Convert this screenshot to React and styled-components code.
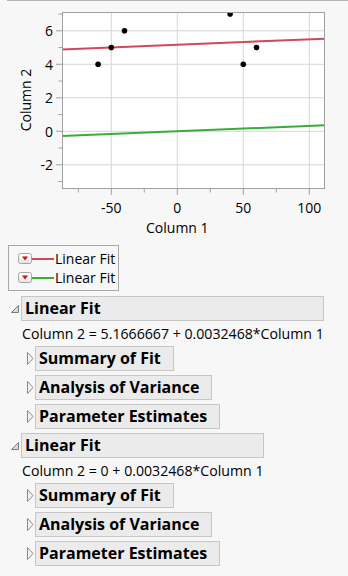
import React from 'react';
import styled, { createGlobalStyle } from 'styled-components';

const Global = createGlobalStyle`
  html, body { margin: 0; padding: 0; background: #f7f7f7; }
  body {
    width: 348px; height: 576px; overflow: hidden;
    font-family: "Open Sans", "Liberation Sans", sans-serif;
    color: #000;
  }
`;

const Page = styled.div`
  display: flex;
  flex-direction: column;
  align-items: flex-start;
  width: 348px;
`;

const TopRule = styled.div`
  align-self: stretch;
  margin-left: 7px;
  height: 1px;
  background: #b4b4b4;
`;

const ChartSvg = styled.svg`
  display: block;
  width: 348px;
  height: 244px;
  font-family: "Open Sans", "Liberation Sans", sans-serif;
  font-size: 14px;
`;

const Legend = styled.div`
  display: flex;
  flex-direction: column;
  margin-left: 8px;
  border: 1px solid #a8a8a8;
  padding: 3px 3px 3px 9px;
`;

const LegendItem = styled.div`
  display: flex;
  align-items: center;
  height: 19px;
`;

const MenuButton = styled.svg`
  display: block;
  flex: none;
  width: 14px;
  height: 11px;
`;

const Swatch = styled.span`
  flex: none;
  width: 22px;
  height: 2px;
  background: ${p => p.$color};
`;

const LegendLabel = styled.span`
  font-size: 14px;
  line-height: 19px;
  margin-left: 1px;
  white-space: nowrap;
`;

const Outlines = styled.div`
  display: flex;
  flex-direction: column;
  gap: 4px;
  margin-top: 5px;
`;

const Node = styled.div`
  display: flex;
  align-items: flex-start;
  margin-left: ${p => p.$indent || 0}px;
`;

const Toggle = styled.svg`
  display: block;
  flex: none;
  width: 11px;
  height: 25px;
`;

const Body = styled.div`
  display: flex;
  flex-direction: column;
  align-items: stretch;
`;

const Header = styled.div`
  box-sizing: border-box;
  height: 25px;
  border: 1px solid #c6c6c6;
  background: #ebebeb;
  font-size: 16px;
  font-weight: 700;
  line-height: 23px;
  padding: 0 ${p => p.$padRight || 0}px 0 3px;
  white-space: nowrap;
`;

const Equation = styled.div`
  font-size: 14.15px;
  line-height: 17px;
  margin: 4px 0 4px 1px;
  white-space: nowrap;
`;

const Children = styled.div`
  display: flex;
  flex-direction: column;
  gap: 4px;
  margin-left: 3px;
`;

const X = v => 177.3 + 1.32 * v;
const Y = v => 131.3 - 16.75 * v;
const PL = 62, PR = 325, PT = 12, PB = 189;

const RED = '#d2485a';
const GREEN = '#3cab3c';

const points = [[-60, 4], [-50, 5], [-40, 6], [40, 7], [50, 4], [60, 5]];
const fits = [
  { a: 5.1666667, b: 0.0032468, color: RED },
  { a: 0, b: 0.0032468, color: GREEN },
];

function Chart() {
  const xMin = (PL - 177.3) / 1.32;
  const xMax = (PR - 177.3) / 1.32;
  return (
    <ChartSvg viewBox="0 1 348 244">
      <defs>
        <clipPath id="plotClip">
          <rect x={PL} y={PT} width={PR - PL} height={PB - PT} />
        </clipPath>
      </defs>
      <rect x={PL} y={PT} width={PR - PL} height={PB - PT} fill="#fff" />
      {[-50, 0, 50, 100].map(v => (
        <line key={'gx' + v} x1={X(v)} x2={X(v)} y1={PT} y2={PB} stroke="#d6d6d6" strokeWidth="1" />
      ))}
      {[-2, 0, 2, 4, 6].map(v => (
        <line key={'gy' + v} x1={PL} x2={PR} y1={Y(v)} y2={Y(v)} stroke="#d6d6d6" strokeWidth="1" />
      ))}
      <g clipPath="url(#plotClip)">
        {fits.map((f, i) => (
          <line key={i} x1={PL} x2={PR} y1={Y(f.a + f.b * xMin)} y2={Y(f.a + f.b * xMax)}
            stroke={f.color} strokeWidth="2" />
        ))}
        {points.map(([px, py], i) => (
          <circle key={i} cx={X(px)} cy={Y(py)} r="2.8" fill="#000" />
        ))}
      </g>
      <rect x={PL + 0.5} y={PT + 0.5} width={PR - PL - 1} height={PB - PT - 1} fill="none" stroke="#a0a0a0" strokeWidth="1" />
      {[-2, 0, 2, 4, 6].map(v => (
        <line key={'ty' + v} x1={56} x2={PL} y1={Y(v)} y2={Y(v)} stroke="#a0a0a0" />
      ))}
      {[-3, -1, 1, 3, 5, 7].map(v => (
        <line key={'my' + v} x1={58.5} x2={PL} y1={Y(v)} y2={Y(v)} stroke="#a0a0a0" />
      ))}
      {[-50, 0, 50, 100].map(v => (
        <line key={'tx' + v} x1={X(v)} x2={X(v)} y1={PB} y2={PB + 6} stroke="#a0a0a0" />
      ))}
      {[-75, -25, 25, 75].map(v => (
        <line key={'mx' + v} x1={X(v)} x2={X(v)} y1={PB} y2={PB + 3.5} stroke="#a0a0a0" />
      ))}
      {[-2, 0, 2, 4, 6].map(v => (
        <text key={'ly' + v} x={53} y={Y(v)} textAnchor="end" dominantBaseline="central">{v}</text>
      ))}
      {[-50, 0, 50, 100].map(v => (
        <text key={'lx' + v} x={X(v)} y={207} textAnchor="middle" dominantBaseline="central">{v}</text>
      ))}
      <text x={X(0)} y={227} textAnchor="middle" dominantBaseline="central">Column 1</text>
      <text x={25} y={100} textAnchor="middle" dominantBaseline="central" transform="rotate(-90 25 100)">Column 2</text>
    </ChartSvg>
  );
}

function RedMenu() {
  return (
    <MenuButton viewBox="0 0 14 11">
      <defs>
        <linearGradient id="btnGrad" x1="0" y1="0" x2="0" y2="1">
          <stop offset="0" stopColor="#ffffff" />
          <stop offset="1" stopColor="#e4e4e4" />
        </linearGradient>
      </defs>
      <rect x="0.5" y="0.5" width="13" height="10" rx="2" fill="url(#btnGrad)" stroke="#a4a4a4" />
      <polygon points="4,3.5 10,3.5 7,7.5" fill="#d40f0f" />
    </MenuButton>
  );
}

function OpenIcon() {
  return (
    <Toggle viewBox="0 0 11 25">
      <polygon points="8.5,9.5 8.5,16.5 1.5,16.5" fill="#d9d9d9" stroke="#7c7c7c" strokeWidth="1" strokeLinejoin="round" />
    </Toggle>
  );
}

function ClosedIcon() {
  return (
    <Toggle viewBox="0 0 11 25">
      <polygon points="3.5,6.5 3.5,18.5 9,12.5" fill="#f4f4f4" stroke="#8a8a8a" strokeWidth="1" strokeLinejoin="round" />
    </Toggle>
  );
}

function SubOutline({ title }) {
  return (
    <Node>
      <ClosedIcon />
      <Body>
        <Header $padRight={12}>{title}</Header>
      </Body>
    </Node>
  );
}

function FitOutline({ equation }) {
  return (
    <Node $indent={10}>
      <OpenIcon />
      <Body>
        <Header>Linear Fit</Header>
        <Equation>{equation}</Equation>
        <Children>
          <SubOutline title="Summary of Fit" />
          <SubOutline title="Analysis of Variance" />
          <SubOutline title="Parameter Estimates" />
        </Children>
      </Body>
    </Node>
  );
}

export default function App() {
  return (
    <Page>
      <Global />
      <TopRule />
      <Chart />
      <Legend>
        <LegendItem>
          <RedMenu />
          <Swatch $color={RED} />
          <LegendLabel>Linear Fit</LegendLabel>
        </LegendItem>
        <LegendItem>
          <RedMenu />
          <Swatch $color={GREEN} />
          <LegendLabel>Linear Fit</LegendLabel>
        </LegendItem>
      </Legend>
      <Outlines>
        <FitOutline equation="Column 2 = 5.1666667 + 0.0032468*Column 1" />
        <FitOutline equation="Column 2 = 0 + 0.0032468*Column 1" />
      </Outlines>
    </Page>
  );
}
